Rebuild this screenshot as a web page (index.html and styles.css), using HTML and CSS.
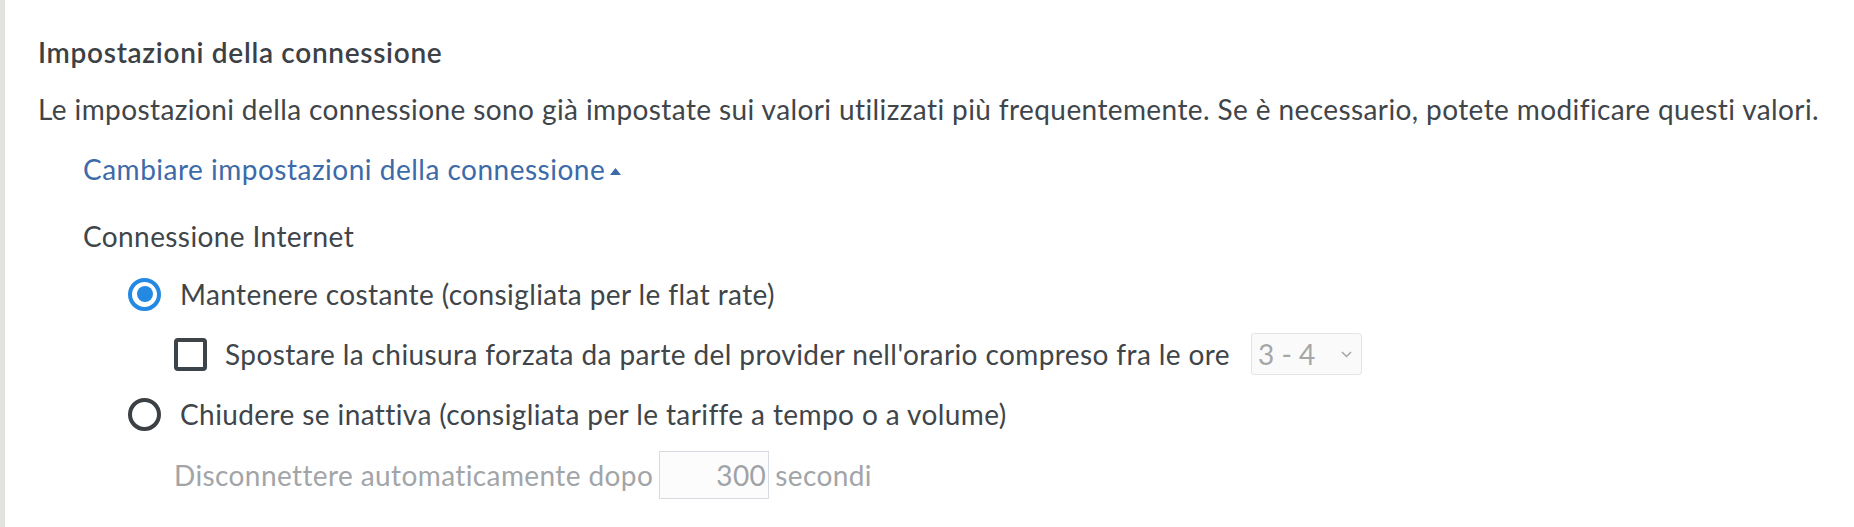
FILE: index.html
```html
<!DOCTYPE html>
<html lang="it">
<head>
<meta charset="utf-8">
<title>Impostazioni della connessione</title>
<link rel="stylesheet" href="styles.css">
</head>
<body>
<div class="page">
  <section class="panel">
    <h2 class="title">Impostazioni della connessione</h2>
    <p class="desc">Le impostazioni della connessione sono già impostate sui valori utilizzati più frequentemente. Se è necessario, potete modificare questi valori.</p>
    <a class="toggle" href="#">Cambiare impostazioni della connessione<svg class="caret" width="11" height="7" viewBox="0 0 11 7"><polygon points="0,7 5.5,0 11,7" fill="#3d6aa8"/></svg></a>
    <div class="group-label">Connessione Internet</div>
    <div class="options">
      <label class="opt">
        <span class="radio checked"></span>
        <span class="opt-text">Mantenere costante (consigliata per le flat rate)</span>
      </label>
      <label class="opt sub">
        <span class="check"></span>
        <span class="opt-text">Spostare la chiusura forzata da parte del provider nell'orario compreso fra le ore</span>
        <span class="select"><span class="select-val">3 - 4</span><svg class="chev" width="11" height="7" viewBox="0 0 11 7"><polyline points="1,1 5.5,5.5 10,1" fill="none" stroke="#a3a3a3" stroke-width="1.5"/></svg></span>
      </label>
      <label class="opt">
        <span class="radio"></span>
        <span class="opt-text">Chiudere se inattiva (consigliata per le tariffe a tempo o a volume)</span>
      </label>
      <div class="opt sub disabled">
        <span>Disconnettere automaticamente dopo</span>
        <span class="num">300</span>
        <span>secondi</span>
      </div>
    </div>
  </section>
</div>
</body>
</html>
```
FILE: styles.css
```css
html, body {
  margin: 0;
  padding: 0;
  background: #ffffff;
}
body {
  font-family: "Lato", "Liberation Sans", sans-serif;
  font-size: 28px;
  letter-spacing: 0.4px;
  line-height: 40px;
  color: #40454a;
  font-variant-ligatures: none;
}
.page {
  border-left: 5px solid #e4e2dd;
  min-height: 527px;
  box-sizing: border-box;
}
.panel {
  padding: 32px 0 0 33px;
  display: flex;
  flex-direction: column;
  align-items: flex-start;
}
.title {
  margin: 0;
  font-size: 28px;
  font-weight: 600;
  letter-spacing: 0.7px;
  line-height: 40px;
  color: #3c4146;
}
.desc {
  margin: 17px 0 0 0;
}
.toggle {
  margin: 20px 0 0 45px;
  color: #3d6aa8;
  text-decoration: none;
  display: inline-flex;
  align-items: center;
  letter-spacing: 0.5px;
}
.caret {
  margin-left: 5px;
  margin-top: 4px;
}
.group-label {
  margin: 27px 0 0 45px;
}
.options {
  display: flex;
  flex-direction: column;
  margin-left: 90px;
  margin-top: 17px;
}
.opt {
  display: flex;
  align-items: center;
  height: 42px;
  margin-bottom: 18px;
}
.opt.sub {
  margin-left: 46px;
}
.radio {
  width: 33px;
  height: 33px;
  box-sizing: border-box;
  border: 4px solid #3b4045;
  border-radius: 50%;
  margin-right: 19px;
  flex: none;
  display: flex;
  align-items: center;
  justify-content: center;
}
.radio.checked {
  border-color: #2389e2;
}
.radio.checked::after {
  content: "";
  width: 16px;
  height: 16px;
  border-radius: 50%;
  background: #2389e2;
}
.check {
  width: 33px;
  height: 33px;
  box-sizing: border-box;
  border: 4px solid #3c4349;
  border-radius: 4px;
  margin-right: 18px;
  flex: none;
}
.select {
  margin-left: 21px;
  width: 111px;
  height: 42px;
  box-sizing: border-box;
  border: 1px solid #e4e4e4;
  border-radius: 3px;
  background: #fafafa;
  display: flex;
  align-items: center;
  justify-content: space-between;
  padding: 0 9px 0 6px;
  color: #a6a6a6;
  letter-spacing: 0;
}
.chev {
  margin-top: 1px;
}
.disabled {
  color: #a2a5a8;
  height: 48px;
  margin-top: -2px;
}
.num {
  width: 110px;
  height: 48px;
  box-sizing: border-box;
  border: 1px solid #d6dce1;
  background: #fcfcfc;
  text-align: right;
  padding-right: 2px;
  line-height: 46px;
  margin: 0 6px;
  color: #a0a3a6;
}
```
